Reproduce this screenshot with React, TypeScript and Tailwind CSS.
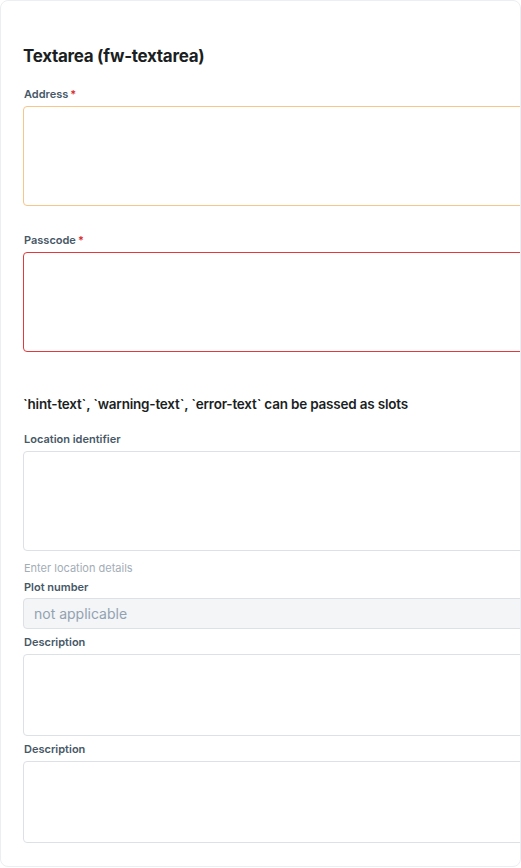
export default function App() {
  return (
    <div className="w-[521px] h-[868px] bg-white" style={{ fontFamily: "Inter, 'Noto Sans', sans-serif" }}>
      <div className="w-[521px] h-[867px] border border-[#ebeff3] rounded-lg overflow-hidden pl-[22px] pt-[42px]">
        <h2 className="text-[17px] leading-[26px] font-bold tracking-[-0.3px] text-[#1b1f23]">Textarea (fw-textarea)</h2>

        <div className="mt-[17px]">
          <label className="flex items-center text-[11px] leading-[16px] font-semibold text-[#475867] pl-[1px]">
            Address<span className="text-[#d72d30] ml-[2px]">*</span>
          </label>
          <div className="mt-[4px] w-[560px] h-[100px] border border-[#f8c58a] rounded-[4px]" />
        </div>

        <div className="mt-[26px]">
          <label className="flex items-center text-[11px] leading-[16px] font-semibold text-[#475867] pl-[1px]">
            Passcode<span className="text-[#d72d30] ml-[2px]">*</span>
          </label>
          <div className="mt-[4px] w-[560px] h-[100px] border border-[#e03a3e] rounded-[4px]" />
        </div>

        <h3 className="mt-[42px] text-[13.5px] leading-[20px] font-semibold tracking-[-0.2px] text-[#1b1f23]">
          `hint-text`, `warning-text`, `error-text` can be passed as slots
        </h3>

        <div className="mt-[17px]">
          <label className="block text-[11px] leading-[16px] font-semibold text-[#475867] pl-[1px]">Location identifier</label>
          <div className="mt-[4px] w-[560px] h-[100px] border border-[#dce1e6] rounded-[4px]" />
          <p className="mt-[10px] text-[11px] leading-[14px] text-[#a3adb7] pl-[1px]">Enter location details</p>
        </div>

        <div className="mt-[4px]">
          <label className="block text-[11px] leading-[16px] font-semibold text-[#475867] pl-[1px]">Plot number</label>
          <div className="mt-[3px] w-[560px] h-[31px] border border-[#dce1e6] rounded-[4px] bg-[#f3f5f7] flex items-center pl-[10px] text-[14px] text-[#92a2b1]">
            not applicable
          </div>
        </div>

        <div className="mt-[5px]">
          <label className="block text-[11px] leading-[16px] font-semibold text-[#475867] pl-[1px]">Description</label>
          <div className="mt-[4px] w-[560px] h-[82px] border border-[#dce1e6] rounded-[4px]" />
        </div>

        <div className="mt-[5px]">
          <label className="block text-[11px] leading-[16px] font-semibold text-[#475867] pl-[1px]">Description</label>
          <div className="mt-[4px] w-[560px] h-[82px] border border-[#dce1e6] rounded-[4px]" />
        </div>
      </div>
    </div>
  );
}
